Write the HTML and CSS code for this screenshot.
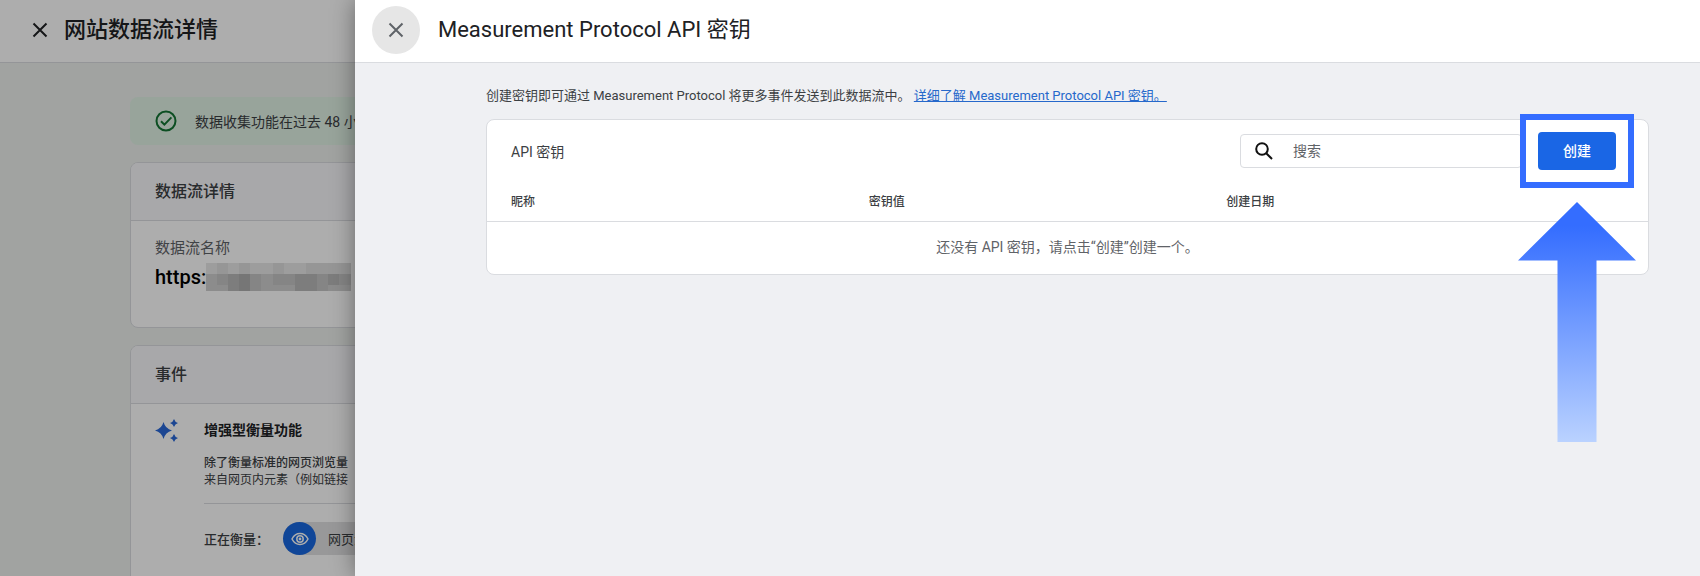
FILE: index.html
```
<!DOCTYPE html>
<html lang="zh-CN">
<head>
	<meta charset="UTF-8">
	<meta name="viewport" content="width=device-width, initial-scale=1.0">
	<title>Measurement Protocol API 密钥</title>
	<link rel="stylesheet" href="styles.css">
</head>
<body>
	<div class="back">
		<header class="bar">
			<button type="button" class="close" aria-label="关闭">
				<svg width="16" height="16" viewBox="0 0 16 16"><path d="M1.5 1.5l13 13M14.5 1.5l-13 13"/></svg>
			</button>
			<h1>网站数据流详情</h1>
		</header>
		<div class="back-main">
			<div class="notice">
				<svg width="22" height="22" viewBox="0 0 22 22"><circle cx="11" cy="11" r="9.5"/><path d="M6 11.2l3.4 3.4 7-7.2"/></svg>
				<span>数据收集功能在过去 48 小</span>
			</div>
			<section class="card">
				<h2>数据流详情</h2>
				<div class="stream">
					<p class="label">数据流名称</p>
					<p class="url">https:<svg class="mosaic" width="145" height="28" viewBox="0 0 145 28" shape-rendering="crispEdges">
						<path fill="#e8e8e8" d="M0 0h145v28H0z"/>
						<path fill="#dedede" d="M11 0h11v11H11zM33 0h11v11H33zM67 0h11v11H67zM100 0h45v11h-45z"/>
						<path fill="#cfcfcf" d="M0 11h11v17H0zM55 11h12v17H55zM122 22h23v6h-23zM11 22h11v6H11zM67 22h22v6H67z"/>
						<path fill="#c4c4c4" d="M11 11h11v11H11zM44 11h11v17H44zM67 11h22v11H67zM111 11h11v17h-11zM133 11h12v11h-12z"/>
						<path fill="#b8b8b8" d="M22 11h11v17H22zM89 11h22v17H89zM122 11h11v11h-11z"/>
						<path fill="#aeaeae" d="M33 11h11v17H33z"/>
					</svg></p>
				</div>
			</section>
			<section class="card">
				<h2>事件</h2>
				<div class="events">
					<svg class="spark" width="24" height="24" viewBox="0 0 24 24">
						<path d="M8.500 3q1.800 6.700 8.500 8.500-6.700 1.800-8.500 8.500-1.800-6.700-8.500-8.500 6.700-1.800 8.500-8.500z"/>
						<path d="M19 0q.9 3.100 4 4-3.100.9-4 4-.9-3.100-4-4 3.100-.9 4-4zM19 15q.9 3.100 4 4-3.100.9-4 4-.9-3.100-4-4 3.100-.9 4-4z"/>
					</svg>
					<div class="events-text">
						<h3>增强型衡量功能</h3>
						<p class="desc"><b>除了衡量标准的网页浏览量</b><br>来自网页内元素（例如链接</p>
						<div class="measure">
							<span>正在衡量：</span>
							<div class="chip">
								<i><svg width="18" height="18" viewBox="0 0 18 18"><path d="M1 9q2.800-5.500 8-5.500T17 9q-2.800 5.500-8 5.500T1 9z"/><circle cx="9" cy="9" r="3.200"/><circle class="dot" cx="9" cy="9" r="1.400"/></svg></i>
								网页浏
							</div>
						</div>
					</div>
				</div>
			</section>
		</div>
	</div>
	<div class="panel">
		<header class="bar">
			<button type="button" class="close round" aria-label="关闭">
				<svg width="16" height="16" viewBox="0 0 16 16"><path d="M1.5 1.5l13 13M14.5 1.5l-13 13"/></svg>
			</button>
			<h1>Measurement Protocol API 密钥</h1>
		</header>
		<main>
			<p class="intro">创建密钥即可通过 Measurement Protocol 将更多事件发送到此数据流中。 <a href="#">详细了解 Measurement Protocol API 密钥。</a></p>
			<section class="card">
				<div class="toolbar">
					<h2>API 密钥</h2>
					<div class="search">
						<svg width="18" height="18" viewBox="0 0 18 18"><circle cx="7" cy="7" r="5.800"/><path d="M11.200 11.200l5.800 5.800"/></svg>
						<input type="text" placeholder="搜索" aria-label="搜索">
					</div>
					<div class="create-wrap">
						<span class="mark"></span>
						<button type="button" class="create">创建</button>
						<svg class="arrow" width="118" height="240" viewBox="0 0 118 240">
							<defs>
								<linearGradient id="fade" x1="0" y1="0" x2="0" y2="1">
									<stop offset="0.1" stop-color="#346dff"/>
									<stop offset="1" stop-color="#bad2ff"/>
								</linearGradient>
							</defs>
							<path fill="url(#fade)" d="M59 0l59 58.500H78.500V240h-39V58.500H0z"/>
						</svg>
					</div>
				</div>
				<table>
					<thead>
						<tr><th>昵称</th><th>密钥值</th><th>创建日期</th><th class="actions"></th></tr>
					</thead>
					<tbody>
						<tr><td colspan="4">还没有 API 密钥，请点击“创建”创建一个。</td></tr>
					</tbody>
				</table>
			</section>
		</main>
	</div>
</body>
</html>
```
FILE: styles.css
```
*{
	box-sizing: border-box;
}
body{
	margin: 0;
	display: flex;
	height: 100vh;
	overflow: hidden;
	font-family: Roboto, "Noto Sans CJK SC", sans-serif;
	font-size: 14px;
	color: #3c4043;
}
h1, h2, h3, p{
	margin: 0;
	font-weight: 400;
}
button, input{
	font-family: inherit;
	font-size: 14px;
}
.bar{
	display: flex;
	align-items: center;
	height: 63px;
	padding-bottom: 2px;
	background: #fff;
	border-bottom: 1px solid #dadce0;
}
.bar h1{
	font-size: 22px;
	line-height: 32px;
	color: #202124;
}
.close{
	display: flex;
	align-items: center;
	justify-content: center;
	width: 48px;
	height: 48px;
	padding: 0;
	border: 0;
	border-radius: 50%;
	background: none;
}
.close svg{
	fill: none;
	stroke: #202124;
	stroke-width: 2;
}
.card{
	border: 1px solid #dadce0;
	border-radius: 8px;
	background: #fff;
}

/* page behind the panel */
.back{
	position: relative;
	flex: 0 0 355px;
	overflow: hidden;
	white-space: nowrap;
	background: #edf1ee;
}
.back::after{
	content: "";
	position: absolute;
	inset: 0;
	background: rgba(0, 0, 0, .32);
}
.back .bar{
	padding-left: 16px;
}
.back .bar h1{
	font-weight: 500;
}
.back-main{
	width: 1200px;
	padding: 34px 0 0 130px;
}
.notice{
	display: flex;
	align-items: center;
	gap: 18px;
	height: 48px;
	padding-left: 25px;
	border-radius: 8px;
	background: #e0f2e5;
}
.notice svg{
	fill: none;
	stroke: #137333;
	stroke-width: 2;
}
.back .card{
	margin-top: 17px;
	overflow: hidden;
}
.back h2{
	height: 58px;
	padding-left: 24px;
	font-size: 16px;
	line-height: 57px;
	font-weight: 500;
	background: #f8f8fb;
	border-bottom: 1px solid #dadce0;
}
.stream{
	height: 106px;
	padding: 16px 24px;
}
.label{
	font-size: 15px;
	line-height: 22px;
	color: #5f6368;
}
.url{
	display: flex;
	align-items: center;
	font-size: 20px;
	line-height: 36px;
	font-weight: 500;
	color: #000;
}
.events{
	display: flex;
	gap: 25px;
	padding: 15px 24px 40px;
}
.spark{
	fill: #2a68d8;
}
.events-text{
	flex: 1;
}
h3{
	font-size: 14px;
	line-height: 22px;
	font-weight: 700;
	color: #202124;
}
.desc{
	padding: 14px 0;
	font-size: 12px;
	line-height: 17px;
	border-bottom: 1px solid #dadce0;
}
.desc b{
	font-weight: 500;
}
.measure{
	display: flex;
	align-items: center;
	gap: 14px;
	padding-top: 18px;
	font-size: 13px;
	font-weight: 500;
}
.chip{
	display: flex;
	align-items: center;
	gap: 12px;
	padding-right: 60px;
	border-radius: 16px;
	background: #e0e0e2;
	font-weight: 400;
}
.chip i{
	display: flex;
	align-items: center;
	justify-content: center;
	width: 33px;
	height: 33px;
	border-radius: 50%;
	background: #1967e0;
}
.chip svg{
	fill: none;
	stroke: #fff;
	stroke-width: 1.5;
}
.chip .dot{
	fill: #fff;
	stroke: none;
}

/* api secret panel */
.panel{
	position: relative;
	flex: 1;
	min-width: 0;
	background: #eff0f3;
	box-shadow: 0 0 22px rgba(0, 0, 0, .4);
}
.panel .bar{
	gap: 18px;
	padding-left: 17px;
}
.round{
	background: #e6e6e6;
}
.round svg{
	stroke: #5f6368;
}
main{
	padding: 22px 51px 0 131px;
}
.intro{
	margin-bottom: 12px;
	font-size: 13px;
	line-height: 22px;
}
.intro a{
	color: #2668cb;
}
.toolbar{
	display: flex;
	align-items: center;
	gap: 16px;
	padding: 12px 32px 11px 24px;
}
.toolbar h2{
	margin-right: auto;
	font-size: 14px;
}
.search{
	display: flex;
	align-items: center;
	gap: 20px;
	width: 282px;
	height: 34px;
	padding-left: 14px;
	border: 1px solid #dadce0;
	border-radius: 4px;
}
.search svg{
	flex: none;
	fill: none;
	stroke: #111;
	stroke-width: 2;
}
.search input{
	flex: 1;
	min-width: 0;
	padding: 0;
	border: 0;
	outline: 0;
	background: none;
}
.search input::placeholder{
	color: #5f6368;
}
.create-wrap{
	position: relative;
}
.create{
	position: relative;
	display: block;
	width: 78px;
	height: 38px;
	padding: 0 0 2px;
	border: 0;
	border-radius: 4px;
	background: #1a66e5;
	color: #fff;
	font-weight: 500;
}
.mark{
	position: absolute;
	inset: -18px;
	border: 6px solid #346dff;
	background: #fff;
}
.arrow{
	position: absolute;
	top: 70px;
	left: -20px;
}
table{
	width: 100%;
	table-layout: fixed;
	border-collapse: collapse;
}
th{
	height: 40px;
	padding: 0 0 0 24px;
	font-size: 12px;
	font-weight: 500;
	text-align: left;
	border-bottom: 1px solid #dadce0;
}
.actions{
	width: 88px;
}
td{
	height: 53px;
	padding: 0 0 3px;
	text-align: center;
	color: #5f6368;
}
```
